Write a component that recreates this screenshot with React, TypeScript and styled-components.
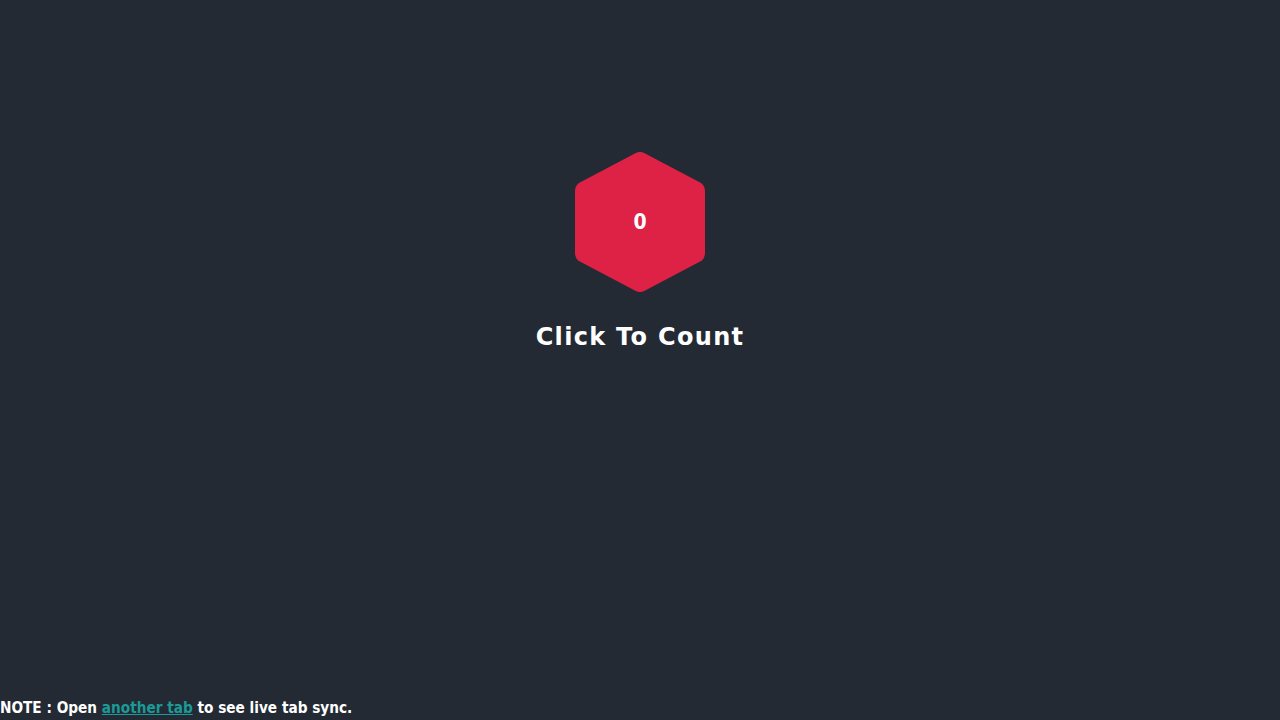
import React, { useState } from 'react';
import styled, { createGlobalStyle } from 'styled-components';

const GlobalStyle = createGlobalStyle`
    html, body {
        margin: 0;
        padding: 0;
        background: #232a34;
        color: #ffffff;
        font-family: "DejaVu Sans", "Noto Sans", sans-serif;
    }
`;

const App: any = () => {
    const [count, setCount] = useState<number>(0);

    return (
        <>
            <GlobalStyle />
            <Page>
                <Counter>
                    <HexButton onClick={() => setCount(count + 1)}>
                        <svg width="130" height="140" viewBox="0 0 130 140">
                            <polygon
                                points="65,10 120,39 120,101 65,130 10,101 10,39"
                                fill="#dd2246"
                                stroke="#dd2246"
                                strokeWidth="20"
                                strokeLinejoin="round"
                            />
                        </svg>
                        <span className="count">{count}</span>
                    </HexButton>
                    <Title>Click To Count</Title>
                </Counter>
                <Note>
                    NOTE : Open <a href="#">another tab</a> to see live tab sync.
                </Note>
            </Page>
        </>
    );
}

export default App;

const Page = styled.div`
    display: flex;
    flex-direction: column;
    min-height: 100vh;
    box-sizing: border-box;
`;

const Counter = styled.div`
    display: flex;
    flex-direction: column;
    align-items: center;
    padding-top: 152px;
    flex: 1;
`;

const HexButton = styled.button`
    position: relative;
    width: 130px;
    height: 140px;
    padding: 0;
    border: none;
    background: none;
    cursor: pointer;

    svg {
        display: block;
    }

    .count {
        position: absolute;
        inset: 0;
        display: flex;
        align-items: center;
        justify-content: center;
        color: #ffffff;
        font-family: "DejaVu Sans Condensed", "DejaVu Sans", sans-serif;
        font-weight: bold;
        font-size: 21px;
    }
`;

const Title = styled.h1`
    margin: 31px 0 0;
    font-size: 24px;
    font-weight: bold;
    letter-spacing: 1.3px;
    color: #ffffff;
`;

const Note = styled.p`
    margin: 0;
    padding-bottom: 2px;
    font-family: "DejaVu Sans Condensed", "DejaVu Sans", sans-serif;
    font-weight: bold;
    font-size: 15.2px;
    line-height: 20px;
    color: #ffffff;

    a {
        color: #1b9a97;
        text-decoration: underline;
    }
`;
